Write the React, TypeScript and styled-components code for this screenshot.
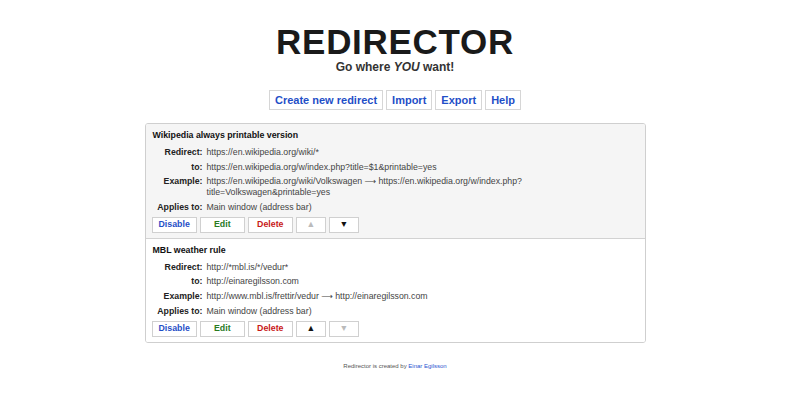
import React from "react";
import styled, { createGlobalStyle } from "styled-components";

const Global = createGlobalStyle`
  html, body { margin: 0; padding: 0; background: #fff; }
  body { font-family: "Liberation Sans", Arial, sans-serif; color: #333; }
`;

const Page = styled.div`
  width: 790px;
  display: flex;
  flex-direction: column;
  align-items: center;
  padding-top: 24px;
`;

const Title = styled.h1`
  margin: 0;
  font-size: 35px;
  line-height: 1;
  font-weight: bold;
  letter-spacing: 0.7px;
  color: #1a1a1a;
`;

const Subtitle = styled.div`
  font-size: 12px;
  line-height: 1;
  font-weight: bold;
  color: #333;
  margin-top: 2px;
`;

const TopMenu = styled.div`
  display: flex;
  gap: 3px;
  margin-top: 17px;
`;

const MenuButton = styled.button`
  height: 20px;
  padding: 0 5px;
  border: 1px solid #d6d6d6;
  background: #fff;
  color: #1f4fc7;
  font-family: "Liberation Sans", Arial, sans-serif;
  font-weight: bold;
  font-size: 11px;
  cursor: pointer;
`;

const List = styled.div`
  width: 499px;
  margin-top: 13px;
  border: 1px solid #cfcfcf;
  border-radius: 3px;
  overflow: hidden;
`;

const Item = styled.div<{ $shaded?: boolean }>`
  background: ${(p) => (p.$shaded ? "#f5f5f5" : "#fff")};
  padding: 5px 6px 5px 6px;
  & + & { border-top: 1px solid #d2d2d2; }
`;

const ItemTitle = styled.div`
  font-size: 8.8px;
  line-height: 12px;
  font-weight: bold;
  color: #111;
  padding-left: 1px;
  margin-bottom: 6px;
`;

const Rows = styled.div`
  display: grid;
  grid-template-columns: 51px 1fr;
  column-gap: 4px;
  row-gap: 3.6px;
  font-size: 8.75px;
  line-height: 11px;
`;

const Label = styled.div`
  text-align: right;
  font-weight: bold;
  color: #222;
  white-space: nowrap;
`;

const Value = styled.div`
  color: #444;
  max-width: 330px;
`;

const Arrow = styled.span`
  font-family: "DejaVu Sans", sans-serif;
  font-size: 8px;
`;

const Actions = styled.div`
  display: flex;
  gap: 3px;
  margin-top: 4px;
`;

const ActionButton = styled.button<{ $color: string; $narrow?: boolean }>`
  height: 16px;
  min-width: ${(p) => (p.$narrow ? "30px" : "45px")};
  padding: 0 6px;
  border: 1px solid #d0d0d0;
  background: #fff;
  color: ${(p) => p.$color};
  font-family: "Liberation Sans", Arial, sans-serif;
  font-weight: bold;
  font-size: 8.8px;
  line-height: 1;
  cursor: pointer;
`;

const Footer = styled.div`
  margin-top: 20px;
  font-size: 6px;
  color: #555;
`;

const FooterLink = styled.a`
  color: #2a55d0;
  text-decoration: none;
`;

type Rule = {
  title: string;
  redirect: string;
  to: string;
  example: React.ReactNode;
  appliesTo: string;
  enabledUp: boolean;
  enabledDown: boolean;
  shaded?: boolean;
};

const rules: Rule[] = [
  {
    title: "Wikipedia always printable version",
    redirect: "https://en.wikipedia.org/wiki/*",
    to: "https://en.wikipedia.org/w/index.php?title=$1&printable=yes",
    example: (
      <>
        https://en.wikipedia.org/wiki/Volkswagen <Arrow>⟶</Arrow> https://en.wikipedia.org/w/index.php?
        <br />
        title=Volkswagen&amp;printable=yes
      </>
    ),
    appliesTo: "Main window (address bar)",
    enabledUp: false,
    enabledDown: true,
    shaded: true,
  },
  {
    title: "MBL weather rule",
    redirect: "http://*mbl.is/*/vedur*",
    to: "http://einaregilsson.com",
    example: (
      <>
        http://www.mbl.is/frettir/vedur <Arrow>⟶</Arrow> http://einaregilsson.com
      </>
    ),
    appliesTo: "Main window (address bar)",
    enabledUp: true,
    enabledDown: false,
  },
];

export default function App() {
  return (
    <>
      <Global />
      <Page>
        <Title>REDIRECTOR</Title>
        <Subtitle>
          Go where <i>YOU</i> want!
        </Subtitle>
        <TopMenu>
          <MenuButton>Create new redirect</MenuButton>
          <MenuButton>Import</MenuButton>
          <MenuButton>Export</MenuButton>
          <MenuButton>Help</MenuButton>
        </TopMenu>
        <List>
          {rules.map((r) => (
            <Item key={r.title} $shaded={r.shaded}>
              <ItemTitle>{r.title}</ItemTitle>
              <Rows>
                <Label>Redirect:</Label>
                <Value>{r.redirect}</Value>
                <Label>to:</Label>
                <Value>{r.to}</Value>
                <Label>Example:</Label>
                <Value>{r.example}</Value>
                <Label>Applies to:</Label>
                <Value>{r.appliesTo}</Value>
              </Rows>
              <Actions>
                <ActionButton $color="#1f4fc7">Disable</ActionButton>
                <ActionButton $color="#2a7a1f">Edit</ActionButton>
                <ActionButton $color="#c81818">Delete</ActionButton>
                <ActionButton $narrow $color={r.enabledUp ? "#111" : "#bbb"}>▲</ActionButton>
                <ActionButton $narrow $color={r.enabledDown ? "#111" : "#bbb"}>▼</ActionButton>
              </Actions>
            </Item>
          ))}
        </List>
        <Footer>
          Redirector is created by <FooterLink href="#">Einar Egilsson</FooterLink>
        </Footer>
      </Page>
    </>
  );
}
